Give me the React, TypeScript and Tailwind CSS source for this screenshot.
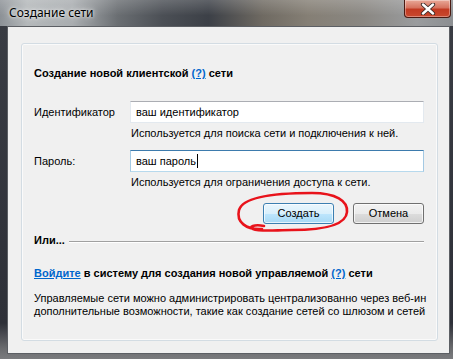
import React from "react";

function CloseButton() {
  return (
    <div className="absolute right-[2px] top-0 w-[47px] h-[18px] rounded-b-[4px] border border-t-0 border-[#4a1a12] bg-[linear-gradient(180deg,#e9a998_0%,#d6735f_45%,#c23a22_55%,#c9492e_100%)] flex items-center justify-center shadow-[inset_0_0_0_1px_rgba(255,255,255,0.35)]">
      <svg width="16" height="12" viewBox="0 0 16 12">
        <path d="M3 1.5 L13 10.5 M13 1.5 L3 10.5" stroke="#3a2a28" strokeWidth="4.2" strokeLinecap="round" />
        <path d="M3 1.5 L13 10.5 M13 1.5 L3 10.5" stroke="#ffffff" strokeWidth="2.4" strokeLinecap="round" />
      </svg>
    </div>
  );
}

function TextBox({ value, focused }: { value: string; focused?: boolean }) {
  return (
    <div
      className={`w-[294px] h-[22px] bg-white border flex items-center pl-[5px] ${
        focused
          ? "border-[#a4c9e3] border-t-[#3d7bad] border-b-[#b7d9ed]"
          : "border-[#e3e9ef] border-t-[#abadb3] border-b-[#e3e9ef]"
      }`}
    >
      <span className="leading-[13px]">{value}</span>
      {focused && <span className="w-px h-[14px] bg-black ml-[1px]" />}
    </div>
  );
}

export default function App() {
  return (
    <div className="w-[453px] h-[359px] overflow-hidden relative bg-[linear-gradient(180deg,#3a3d44_0%,#2e3038_90%,#6a6b6e_97%,#7a7b7e_100%)] font-['Liberation_Sans',Arial,sans-serif] text-[11px] text-black">
      {/* title bar glass */}
      <div className="absolute left-0 top-0 w-[453px] h-[26px] bg-[linear-gradient(90deg,#8c9196_0%,#b4b8ba_6%,#a9adb0_16%,#6a6e72_26%,#4b4f55_36%,#3c4047_46%,#6f6a62_58%,#857f75_68%,#8a8782_80%,#9a9c9e_92%,#8c8f92_100%)]" />
      <div className="absolute left-0 top-0 w-[453px] h-[26px] bg-[linear-gradient(180deg,rgba(255,255,255,0.18)_0%,rgba(255,255,255,0)_60%)]" />
      <div className="relative h-[26px] flex items-center pl-[9px]">
        <span className="font-['Noto_Sans',sans-serif] text-[12px] leading-[16px] text-black [text-shadow:0_0_6px_rgba(255,255,255,0.9),0_0_3px_rgba(255,255,255,0.8)]">
          Создание сети
        </span>
        <CloseButton />
      </div>

      {/* client area */}
      <div className="relative ml-[7px] w-[443px] h-[328px] border border-[#5c5f64] bg-[#f0f0f0]">
        <div className="mt-[16px] ml-[13px] w-[417px] h-[298px] rounded-[3px] border border-[#d3dce3] shadow-[inset_0_0_0_1px_#fafafa] pl-[12px] pr-[13px] flex flex-col">
          <div className="mt-[22px] leading-[14px] font-bold">
            Создание новой клиентской{" "}
            <span className="text-[#0066cc] underline">(?)</span> сети
          </div>

          <div className="mt-[21px] flex items-center">
            <div className="w-[96px]">Идентификатор</div>
            <TextBox value="ваш идентификатор" />
          </div>
          <div className="mt-[4px] ml-[97px] leading-[13px]">
            Используется для поиска сети и подключения к ней.
          </div>

          <div className="mt-[10px] flex items-center">
            <div className="w-[96px]">Пароль:</div>
            <TextBox value="ваш пароль" focused />
          </div>
          <div className="mt-[4px] ml-[97px] leading-[13px]">
            Используется для ограничения доступа к сети.
          </div>

          <div className="mt-[14px] flex justify-end gap-[19px]">
            <button className="w-[71px] h-[21px] rounded-[3px] border border-[#3c7fb1] bg-[linear-gradient(180deg,#eaf6fd_0%,#d9f0fc_50%,#bee6fd_51%,#a7d9f5_100%)] shadow-[inset_0_0_0_1px_rgba(255,255,255,0.7)] leading-[13px]">
              Создать
            </button>
            <button className="w-[71px] h-[21px] rounded-[3px] border border-[#707070] bg-[linear-gradient(180deg,#f2f2f2_0%,#ebebeb_50%,#dddddd_51%,#cfcfcf_100%)] shadow-[inset_0_0_0_1px_rgba(255,255,255,0.7)] leading-[13px]">
              Отмена
            </button>
          </div>

          <div className="mt-[10px] flex items-center leading-[13px]">
            <span className="font-bold">Или...</span>
            <div className="flex-1 ml-[4px] mt-[2px] border-t border-[#a0a0a0] border-b border-b-white h-0" />
          </div>

          <div className="mt-[19px] leading-[14px] font-bold whitespace-nowrap">
            <span className="text-[#0066cc] underline">Войдите</span> в систему для
            создания новой управляемой{" "}
            <span className="text-[#0066cc] underline">(?)</span> сети
          </div>

          <div className="mt-[12px] leading-[13px] whitespace-nowrap">
            <div>Управляемые сети можно администрировать централизованно через веб-ин</div>
            <div>дополнительные возможности, такие как создание сетей со шлюзом и сетей</div>
          </div>
        </div>
      </div>

      {/* red marker ellipse */}
      <svg className="absolute left-0 top-0" width="453" height="359" viewBox="0 0 453 359">
        <path
          d="M262 229 C246 230 236 222 239 210 C243 197 275 193 312 193 C336 193 348 201 347 212 C346 226 322 230 292 230 C276 230 260 232 253 229 C248 227 254 224 264 226"
          fill="none"
          stroke="#e8131b"
          strokeWidth="2.6"
          strokeLinecap="round"
        />
      </svg>
    </div>
  );
}
